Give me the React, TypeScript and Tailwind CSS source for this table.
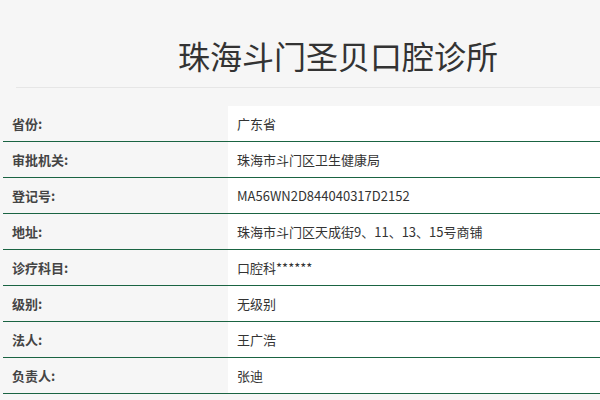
const rows: [string, string][] = [
  ['省份:', '广东省'],
  ['审批机关:', '珠海市斗门区卫生健康局'],
  ['登记号:', 'MA56WN2D844040317D2152'],
  ['地址:', '珠海市斗门区天成街9、11、13、15号商铺'],
  ['诊疗科目:', '口腔科******'],
  ['级别:', '无级别'],
  ['法人:', '王广浩'],
  ['负责人:', '张迪'],
];

export default function App() {
  return (
    <div
      className="w-[600px] h-[400px] overflow-hidden bg-[#f6f6f6] text-[#333]"
      style={{ fontFamily: '"Microsoft YaHei", "Noto Sans CJK SC", "Open Sans", sans-serif' }}
    >
      {/* Title */}
      <div className="ml-4 h-[88px] border-b border-[#e6e6e6] pl-[162px] pt-[34px]">
        <h1 className="text-[32px] leading-[42px] font-normal text-[#333]">
          珠海斗门圣贝口腔诊所
        </h1>
      </div>

      {/* Detail table */}
      <div className="mt-[18px] ml-[3px]">
        {rows.map(([label, value]) => (
          <div key={label} className="flex h-9 border-b border-[#1a6442]">
            <div className="w-[225px] pl-[9px] flex items-center text-[13px] font-bold text-[#444]">
              {label}
            </div>
            <div className="flex-1 bg-white pl-[9px] flex items-center text-[13px] text-[#333]">
              {value}
            </div>
          </div>
        ))}
      </div>
    </div>
  );
}
